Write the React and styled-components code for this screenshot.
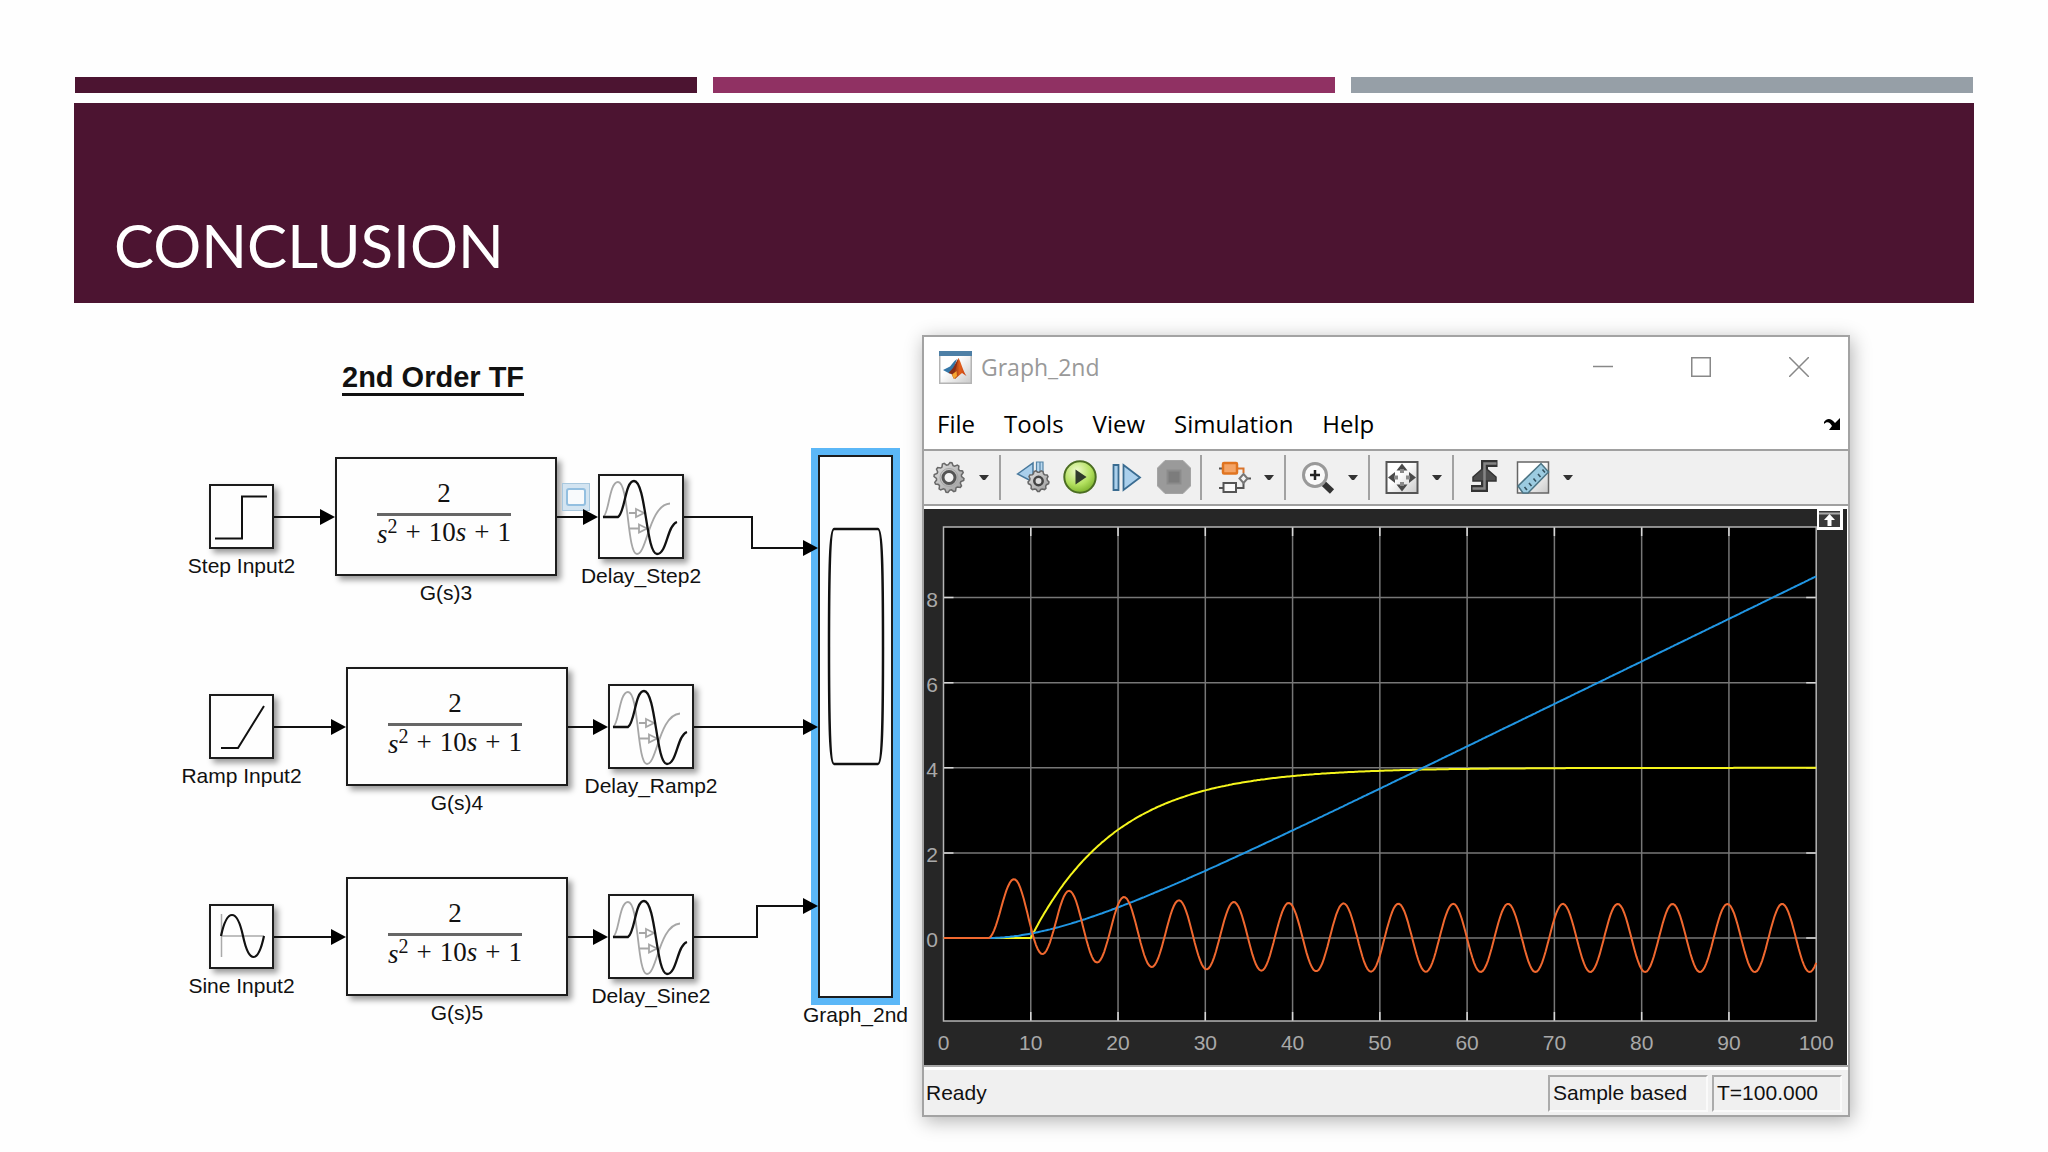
import React from "react";
import styled, { createGlobalStyle } from "styled-components";

const Global = createGlobalStyle`
  * { box-sizing: border-box; }
  body { margin: 0; background: #fefefe; }
  button { font: inherit; color: inherit; background: none; border: 0; padding: 0; margin: 0; }
  svg { display: block; }
`;

const sans = `"Liberation Sans", Arial, sans-serif`;
const ui = `"Open Sans", "Segoe UI", sans-serif`;

/* ---------- slide ---------- */

const Slide = styled.main`
  min-height: 100vh;
  padding: 77px 74px 0;
  font-family: ${sans};
`;

const Stripes = styled.div`
  display: grid;
  grid-template-columns: repeat(3, 1fr);
  gap: 16px;
  padding: 0 1px;
`;

const Stripe = styled.span`
  height: 16px;
  background: ${(p) => p.$color};
`;

const Banner = styled.header`
  display: flex;
  align-items: flex-end;
  height: 200px;
  margin-top: 10px;
  padding: 0 40px 28px;
  background: #4c1431;
`;

const Title = styled.h1`
  margin: 0;
  font: 400 60px/60px Lato, "Gill Sans", sans-serif;
  color: #fff;
  text-transform: uppercase;
`;

const Content = styled.div`
  display: flex;
  align-items: flex-start;
  padding-right: 124px;
`;

/* ---------- block diagram ---------- */

const Canvas = styled.section`
  position: relative;
  flex: none;
  width: 848px;
  height: 740px;
  color: #111;
`;

const CanvasTitle = styled.h2`
  position: absolute;
  left: 268px;
  top: 59px;
  margin: 0;
  padding-bottom: 1px;
  border-bottom: 3px solid #111;
  font-size: 29px;
  line-height: 30px;
  white-space: nowrap;
`;

const Node = styled.figure`
  position: absolute;
  left: ${(p) => p.$x}px;
  top: ${(p) => p.$y}px;
  width: ${(p) => p.$w}px;
  margin: 0;
  display: flex;
  flex-direction: column;
  align-items: center;
`;

const Block = styled.div`
  width: 100%;
  height: ${(p) => p.$h}px;
  display: flex;
  align-items: center;
  justify-content: center;
  background: #fefefe;
  border: 2px solid #1c1c1c;
  box-shadow: ${(p) => (p.$selected ? "0 0 0 7px #5bb7f7" : "4px 4px 6px rgba(0, 0, 0, 0.4)")};
`;

const Caption = styled.figcaption`
  margin-top: 5px;
  font-size: 21px;
  line-height: 24px;
  white-space: nowrap;
`;

const Fraction = styled.div`
  display: flex;
  flex-direction: column;
  align-items: center;
  gap: 4px;
  padding: 0 4px 6px 0;
  font-family: "Liberation Serif", "Times New Roman", serif;
  font-size: 27px;
  line-height: 32px;
  color: #111;
`;

const Denominator = styled.div`
  display: flex;
  gap: 8px;
  border-top: 3px solid #666;
  white-space: nowrap;
  sup {
    font-size: 20px;
    line-height: 20px;
    vertical-align: 10px;
  }
`;

const Probe = styled.button`
  position: absolute;
  left: 488px;
  top: 180px;
  width: 28px;
  height: 28px;
  padding: 4px 3px;
  background: #d3e4f1;
  border: 1px solid #a9c8de;
  &::before {
    content: "";
    display: block;
    height: 14px;
    background: #f8fafc;
    border: 2px solid #93bfe0;
    border-radius: 3px;
  }
`;

const Wires = styled.svg`
  position: absolute;
  inset: 0;
  pointer-events: none;
`;

const StepGlyph = () => (
  <svg width="61" height="61" fill="none" stroke="#111" strokeWidth="2">
    <path d="M4 52.500H31V10.500H56" />
  </svg>
);
const RampGlyph = () => (
  <svg width="61" height="61" fill="none" stroke="#111" strokeWidth="2">
    <path d="M10 52H27L53 10" />
  </svg>
);
const SineGlyph = () => (
  <svg width="61" height="61" fill="none">
    <path d="M10.500 8V51M10 30H53" stroke="#aaa" strokeWidth="1.500" />
    <path d="M10 30C16 2 26 2 32 30S47 58 53 30" stroke="#111" strokeWidth="2.200" />
  </svg>
);
const DelayGlyph = () => (
  <svg width="82" height="81" fill="none">
    <g stroke="#a6a6a6" strokeWidth="1.800">
      <path d="M3 41C9 39 9 6 18 6C29 6 27 78 37 78C47 78 49 29 70 27.500" />
      <path d="M29 37H36M30 52.500H39" />
      <path d="M36 33L44 37L36 41ZM39 48.500L47 52.500L39 56.500Z" />
    </g>
    <path d="M3 41H18C25 37 25 5 34 5C46 5 46 78 57 78C67 78 67 49 77 46" stroke="#111" strokeWidth="2.300" />
  </svg>
);
const ScopeGlyph = () => (
  <svg width="71" height="539" fill="none" stroke="#111" strokeWidth="2.500">
    <path d="M14 72H58C62 72 63 110 63 190S62 307 58 307H14C10 307 9 270 9 190S10 72 14 72Z" />
  </svg>
);

function Source({ x, y, name, children }) {
  return (
    <Node $x={x} $y={y} $w={65}>
      <Block $h={65}>{children}</Block>
      <Caption>{name}</Caption>
    </Node>
  );
}

function TransferFn({ x, y, name }) {
  return (
    <Node $x={x} $y={y} $w={222}>
      <Block $h={119}>
        <Fraction>
          <span>2</span>
          <Denominator>
            <span>
              <i>s</i>
              <sup>2</sup>
            </span>
            <span>+</span>
            <span>
              10<i>s</i>
            </span>
            <span>+</span>
            <span>1</span>
          </Denominator>
        </Fraction>
      </Block>
      <Caption>{name}</Caption>
    </Node>
  );
}

function Delay({ x, y, name }) {
  return (
    <Node $x={x} $y={y} $w={86}>
      <Block $h={85}>
        <DelayGlyph />
      </Block>
      <Caption>{name}</Caption>
    </Node>
  );
}

const wirePaths = [
  "M200 214H247", "M483 214H510", "M610 214H678V245H730",
  "M200 424H258", "M494 424H520", "M620 424H730",
  "M200 634H258", "M494 634H520", "M620 634H683V603H730",
];
const arrowTips = [
  [261, 214], [524, 214], [744, 245],
  [272, 424], [534, 424], [744, 424],
  [272, 634], [534, 634], [744, 603],
];

function Diagram() {
  return (
    <Canvas aria-label="Simulink model">
      <CanvasTitle>2nd Order TF</CanvasTitle>
      <Source x={135} y={181} name="Step Input2"><StepGlyph /></Source>
      <Source x={135} y={391} name="Ramp Input2"><RampGlyph /></Source>
      <Source x={135} y={601} name="Sine Input2"><SineGlyph /></Source>
      <TransferFn x={261} y={154} name="G(s)3" />
      <TransferFn x={272} y={364} name="G(s)4" />
      <TransferFn x={272} y={574} name="G(s)5" />
      <Delay x={524} y={171} name="Delay_Step2" />
      <Delay x={534} y={381} name="Delay_Ramp2" />
      <Delay x={534} y={591} name="Delay_Sine2" />
      <Node $x={744} $y={152} $w={75}>
        <Block $h={543} $selected><ScopeGlyph /></Block>
        <Caption>Graph_2nd</Caption>
      </Node>
      <Probe aria-label="Signal probe" />
      <Wires width="848" height="740">
        <g fill="none" stroke="#111" strokeWidth="2">
          {wirePaths.map((d) => <path key={d} d={d} />)}
        </g>
        {arrowTips.map(([x, y]) => (
          <path key={`${x}-${y}`} d={`M${x} ${y}l-15 -8v16z`} fill="#000" />
        ))}
      </Wires>
    </Canvas>
  );
}

/* ---------- scope window ---------- */

const Window = styled.section`
  flex: 1;
  min-width: 0;
  margin-top: 32px;
  background: #fff;
  border: 2px solid #a3a3a3;
  box-shadow: 2px 4px 18px rgba(0, 0, 0, 0.3);
  font-family: ${ui};
`;

const TitleBar = styled.div`
  display: flex;
  align-items: center;
  height: 60px;
  padding-left: 15px;
`;

const WindowName = styled.h3`
  flex: 1;
  margin: 0 0 0 9px;
  font-size: 23px;
  line-height: 32px;
  font-weight: 400;
  color: #999;
`;

const WindowButton = styled.button`
  display: flex;
  align-items: center;
  justify-content: center;
  width: 98px;
  height: 60px;
`;

const MenuBar = styled.nav`
  display: flex;
  align-items: center;
  gap: 29px;
  height: 54px;
  padding: 2px 8px 0 13px;
  border-bottom: 2px solid #a0a0a0;
  font-size: 24px;
  line-height: 32px;
  color: #000;
`;

const DockButton = styled.button`
  margin-left: auto;
`;

const Toolbar = styled.div`
  display: flex;
  align-items: center;
  height: 55px;
  padding-left: 8px;
  background: #f0f0f0;
  border-bottom: 2px solid #a0a0a0;
`;

const ToolGroup = styled.div`
  display: flex;
  gap: ${(p) => (p.$menu ? 6 : 13)}px;
  padding-right: ${(p) => (p.$menu ? 0 : 6)}px;
`;

const Tool = styled.button`
  display: flex;
  align-items: center;
  justify-content: center;
  width: ${(p) => (p.$narrow ? 24 : 34)}px;
  height: 36px;
`;

const Divider = styled.span`
  width: 2px;
  height: 45px;
  margin: 0 15px 0 3px;
  background: #a2a2a2;
`;

const Plot = styled.div`
  position: relative;
  margin: 3px 1px 0 0;
  background: #262626;
  svg.chart {
    width: 100%;
    height: auto;
    font-family: ${sans};
    font-size: 21px;
  }
`;

const PinButton = styled.button`
  position: absolute;
  top: 0;
  right: 4px;
  width: 26px;
  height: 21px;
  background: #fff;
`;

const StatusBar = styled.footer`
  display: flex;
  gap: 4px;
  height: 50px;
  padding: 8px 6px 3px 2px;
  background: #f0f0f0;
  border-top: 2px solid #a6a6a6;
  box-shadow: inset 0 3px 0 #fff;
  font-family: ${sans};
  font-size: 21px;
  line-height: 36px;
  color: #111;
`;

const Status = styled.span`
  flex: 1;
`;

const StatusCell = styled.span`
  width: ${(p) => p.$w}px;
  padding-left: 3px;
  line-height: 32px;
  border: 2px solid;
  border-color: #ababab #fafafa #fafafa #ababab;
`;

/* gear outline with n teeth */
function gear(cx, cy, r, n) {
  const pts = [];
  for (let i = 0; i < n * 4; i++) {
    const a = ((i + 0.5) / (n * 4)) * Math.PI * 2;
    const rr = i % 4 < 2 ? r : r * 0.84;
    pts.push(`${(cx + rr * Math.cos(a)).toFixed(1)} ${(cy + rr * Math.sin(a)).toFixed(1)}`);
  }
  return `M${pts.join("L")}Z`;
}

const Icon = ({ children }) => (
  <svg width="34" height="36" viewBox="0 0 34 36" fill="none" aria-hidden="true">
    {children}
  </svg>
);

const Caret = () => (
  <svg width="10" height="5" aria-hidden="true"><path d="M0 0H10L6 5H4Z" fill="#333" /></svg>
);

const GearIcon = () => (
  <Icon>
    <path d={gear(17, 17.5, 15, 12)} fill="url(#metal)" stroke="#686868" strokeWidth="1.500" />
    <circle cx="17" cy="17.500" r="6" fill="#f4f4f4" stroke="#555" strokeWidth="3" />
    <circle cx="17" cy="17.500" r="9" stroke="#a5a5a5" />
  </Icon>
);
const BackIcon = () => (
  <Icon>
    <path d="M1.500 14L17 3V22Z" fill="#a9cfec" stroke="#47789c" strokeWidth="1.500" />
    <path d="M20.500 2H24V13H20.500ZM24 2H27V13H24Z" fill="#b8d8ef" stroke="#5585a8" strokeWidth="1.200" />
    <path d={gear(22.5, 21, 10.5, 9)} fill="url(#metal)" stroke="#666" strokeWidth="1.500" />
    <circle cx="22.500" cy="21" r="4.200" fill="#ddd" stroke="#444" strokeWidth="2.500" />
  </Icon>
);
const PlayIcon = () => (
  <Icon>
    <circle cx="17" cy="17" r="15.700" fill="url(#green)" stroke="#4b6d22" strokeWidth="2" />
    <path d="M12.500 9.500L23.500 17L12.500 24.500Z" fill="#303a2c" />
  </Icon>
);
const StepIcon = () => (
  <Icon>
    <path d="M3.500 5H8.500V30H3.500ZM13.500 5L30 17.500L13.500 30Z" fill="#abd0ec" stroke="#3a6c91" strokeWidth="1.800" />
  </Icon>
);
const StopIcon = () => (
  <Icon>
    <path d="M8 .5H26L33.500 8V26L26 33.500H8L.5 26V8Z" fill="#9a9a9a" stroke="#a4a4a4" strokeLinejoin="round" />
    <rect x="10.500" y="10.500" width="13" height="13" fill="#7c7c7c" stroke="#8b8b8b" strokeWidth="2" />
  </Icon>
);
const BlocksIcon = () => (
  <Icon>
    <path d="M2 8.500H6M26.500 23V28H19M2 28H6M30 18.500H34" stroke="#555" strokeWidth="2" />
    <path d="M20 8.500H26.500V13" stroke="#d9732a" strokeWidth="2" />
    <rect x="6" y="3" width="14" height="10.500" rx="1" fill="#f4a466" stroke="#e07420" strokeWidth="2.500" />
    <rect x="6.500" y="23" width="12.500" height="9" fill="#fafafa" stroke="#555" strokeWidth="2" />
    <path d="M26.500 14L30.500 18.500L26.500 23L22.500 18.500Z" fill="#f4f4f4" stroke="#777" strokeWidth="2" />
  </Icon>
);
const ZoomIcon = () => (
  <Icon>
    <path d="M22 23L31 31.500" stroke="#333" strokeWidth="6" />
    <circle cx="14" cy="15" r="11.500" fill="#fafafa" stroke="#999" strokeWidth="3" />
    <path d="M9 15H19M14 10V20" stroke="#222" strokeWidth="2.500" />
  </Icon>
);
const FitIcon = () => (
  <Icon>
    <rect x="1.500" y="2" width="31" height="31" fill="url(#paper)" stroke="#555" strokeWidth="2" />
    <g fill="#4a4a4a">
      <path d="M17 3.500L22.500 10.500H11.500Z" /><path d="M17 31.500L22.500 24.500H11.500Z" />
      <path d="M3 17.500L10 12V23Z" /><path d="M31 17.500L24 12V23Z" />
    </g>
    <path d="M17 9V13M17 22V26M9 17.500H13M21 17.500H25" stroke="#8a8a8a" strokeWidth="4" />
  </Icon>
);
const TriggerIcon = () => (
  <Icon>
    <path d="M2 28.500H15.500V3.500H28.500" stroke="#333" strokeWidth="7" />
    <path d="M15.500 7L27 17V21H4V17Z" fill="#4d4d4d" stroke="#333" strokeWidth="1.500" />
    <path d="M3.500 28.500H15.500V3.500H27.500" stroke="#858585" strokeWidth="2.500" />
  </Icon>
);
const RulerIcon = () => (
  <Icon>
    <rect x="1.500" y="2" width="31" height="31" fill="url(#paper)" stroke="#666" strokeWidth="1.500" />
    <path d="M2 26L25 3.500L32.500 12L12 33H7Z" fill="#9ccbe0" stroke="#4c7484" strokeWidth="1.500" />
    <path d="M11 30L8.500 27M15.500 26L13 23M20 21.500L17.500 18.500M24.500 17L22 14M29 12.500L26.500 9.500" stroke="#34515f" strokeWidth="1.600" />
  </Icon>
);

const HiddenDefs = styled.svg`
  position: absolute;
`;

const IconPaints = () => (
  <HiddenDefs width="0" height="0" aria-hidden="true">
    <defs>
      <linearGradient id="metal" x1="0" y1="0" x2="1" y2="1">
        <stop offset="0" stopColor="#e2e2e2" /><stop offset="1" stopColor="#9a9a9a" />
      </linearGradient>
      <radialGradient id="green" cx=".4" cy=".3" r=".75">
        <stop offset="0" stopColor="#eefacb" /><stop offset=".6" stopColor="#b2e05e" /><stop offset="1" stopColor="#76ad27" />
      </radialGradient>
      <linearGradient id="paper" x1="0" y1="0" x2="1" y2="1">
        <stop offset=".4" stopColor="#fff" /><stop offset="1" stopColor="#c9c9c9" />
      </linearGradient>
      <linearGradient id="flame" x1="0" y1="0" x2="1" y2="0">
        <stop offset="0" stopColor="#7c2a12" /><stop offset=".5" stopColor="#e2601b" /><stop offset="1" stopColor="#c23d12" />
      </linearGradient>
    </defs>
  </HiddenDefs>
);

const AppLogo = () => (
  <svg width="33" height="33" aria-hidden="true">
    <rect x=".75" y=".75" width="31.500" height="31.500" fill="url(#paper)" stroke="#b4b4b4" strokeWidth="1.500" />
    <rect width="33" height="5" fill="#4d7fa6" />
    <path d="M4 19L11 15.500L15.500 10L18 8L13 23L9.500 22Z" fill="#3577a8" />
    <path d="M9.500 22L14 17L19.500 7L19 22L15 28L12.500 23Z" fill="#8b2c16" />
    <path d="M19.500 7C22 11 24 20 27.500 25L23 22L16 28L14 24C17 19 18 13 19.500 7Z" fill="url(#flame)" />
    <path d="M13 24C15 21 16 22 17.500 20L18 25L15 28Z" fill="#f6a531" />
  </svg>
);

/* plot geometry, in chart units */
const X0 = 19.5;
const DX = 8.727;
const Y0 = 429;
const DY = 42.55;
const TOP = 18;
const BOTTOM = 512;
const RIGHT = X0 + DX * 100;
const px = (t) => X0 + t * DX;
const py = (v) => Y0 - v * DY;

/* responses of 2 / (s^2 + 10 s + 1) */
const TAU = 9.9;
const step = (t) => (t < 10 ? 0 : 4 * (1 - Math.exp(-(t - 10) / TAU)));
const ramp = (t) => (t < 5 ? 0 : 0.1 * (t - 15 + 10 * Math.exp(-(t - 5) / TAU)));
const sine = (t) => (t < 5 ? 0 : 0.8 * (Math.exp(-(t - 5) / TAU) - Math.cos(t - 5)));

function trace(f) {
  const pts = [];
  for (let i = 0; i <= 500; i++) pts.push(`${px(i / 5).toFixed(1)},${py(f(i / 5)).toFixed(1)}`);
  return pts.join(" ");
}

const traces = [
  { name: "step", color: "#f5f51c", f: step },
  { name: "ramp", color: "#2196e3", f: ramp },
  { name: "sine", color: "#f0682f", f: sine },
];
const xTicks = [0, 10, 20, 30, 40, 50, 60, 70, 80, 90, 100];
const yTicks = [0, 2, 4, 6, 8];

function Chart() {
  return (
    <svg className="chart" viewBox="0 0 923 556" role="img" aria-label="Scope output">
      <rect x={X0} y={TOP} width={RIGHT - X0} height={BOTTOM - TOP} fill="#000" />
      <g stroke="#777" strokeWidth="1.500">
        {xTicks.slice(1, -1).map((t) => <path key={t} d={`M${px(t)} ${TOP}V${BOTTOM}`} />)}
        {yTicks.map((v) => <path key={v} d={`M${X0} ${py(v)}H${RIGHT}`} />)}
      </g>
      <g stroke="#d8d8d8" strokeWidth="1.500">
        {xTicks.slice(1, -1).map((t) => <path key={t} d={`M${px(t)} ${TOP}v9M${px(t)} ${BOTTOM}v-9`} />)}
        {yTicks.map((v) => <path key={v} d={`M${X0} ${py(v)}h10M${RIGHT} ${py(v)}h-10`} />)}
      </g>
      <rect x={X0} y={TOP} width={RIGHT - X0} height={BOTTOM - TOP} fill="none" stroke="#b5b5b5" strokeWidth="1.500" />
      {traces.map((t) => (
        <polyline key={t.name} points={trace(t.f)} fill="none" stroke={t.color} strokeWidth="2" />
      ))}
      <g fill="#a9a9a9">
        {xTicks.map((t) => <text key={t} x={px(t)} y="541" textAnchor="middle">{t}</text>)}
        {yTicks.map((v) => <text key={v} x="14" y={py(v) + 9} textAnchor="end">{v}</text>)}
      </g>
    </svg>
  );
}

function MenuTool({ label, children }) {
  return (
    <ToolGroup $menu>
      <Tool aria-label={label}>{children}</Tool>
      <Tool $narrow aria-label={`${label} options`}><Caret /></Tool>
    </ToolGroup>
  );
}

function ScopeWindow() {
  return (
    <Window>
      <IconPaints />
      <TitleBar>
        <AppLogo />
        <WindowName>Graph_2nd</WindowName>
        <WindowButton aria-label="Minimize">
          <svg width="20" height="20"><path d="M0 9.500H20" stroke="#888" strokeWidth="1.500" /></svg>
        </WindowButton>
        <WindowButton aria-label="Maximize">
          <svg width="20" height="20"><rect x=".75" y=".75" width="18.500" height="18.500" fill="none" stroke="#888" strokeWidth="1.500" /></svg>
        </WindowButton>
        <WindowButton aria-label="Close">
          <svg width="20" height="20"><path d="M0 0L20 20M20 0L0 20" stroke="#888" strokeWidth="1.500" /></svg>
        </WindowButton>
      </TitleBar>
      <MenuBar>
        {["File", "Tools", "View", "Simulation", "Help"].map((m) => <button key={m}>{m}</button>)}
        <DockButton aria-label="Dock window">
          <svg width="16" height="12"><path d="M0 4C3 0 7 0 11 5L16 0V12H5L8 8C6 4 3 3 0 6Z" fill="#000" /></svg>
        </DockButton>
      </MenuBar>
      <Toolbar>
        <MenuTool label="Settings"><GearIcon /></MenuTool>
        <Divider />
        <ToolGroup>
          <Tool aria-label="Step back"><BackIcon /></Tool>
          <Tool aria-label="Run"><PlayIcon /></Tool>
          <Tool aria-label="Step forward"><StepIcon /></Tool>
          <Tool aria-label="Stop"><StopIcon /></Tool>
        </ToolGroup>
        <Divider />
        <MenuTool label="Highlight block"><BlocksIcon /></MenuTool>
        <Divider />
        <MenuTool label="Zoom"><ZoomIcon /></MenuTool>
        <Divider />
        <MenuTool label="Scale axes"><FitIcon /></MenuTool>
        <Divider />
        <ToolGroup>
          <Tool aria-label="Triggers"><TriggerIcon /></Tool>
          <MenuTool label="Measurements"><RulerIcon /></MenuTool>
        </ToolGroup>
      </Toolbar>
      <Plot>
        <Chart />
        <PinButton aria-label="Maximize axes">
          <svg width="26" height="21">
            <rect x="2" y="2" width="21" height="16" fill="#3a3a3a" />
            <path d="M2 4.500H23" stroke="#aaa" strokeWidth="2" />
            <path d="M12.500 5L18 11H14.500V17H10.500V11H7Z" fill="#fff" />
          </svg>
        </PinButton>
      </Plot>
      <StatusBar>
        <Status>Ready</Status>
        <StatusCell $w={160}>Sample based</StatusCell>
        <StatusCell $w={130}>T=100.000</StatusCell>
      </StatusBar>
    </Window>
  );
}

export default function App() {
  return (
    <>
      <Global />
      <Slide>
        <Stripes>
          <Stripe $color="#4c1431" />
          <Stripe $color="#903163" />
          <Stripe $color="#969fa7" />
        </Stripes>
        <Banner>
          <Title>Conclusion</Title>
        </Banner>
        <Content>
          <Diagram />
          <ScopeWindow />
        </Content>
      </Slide>
    </>
  );
}
